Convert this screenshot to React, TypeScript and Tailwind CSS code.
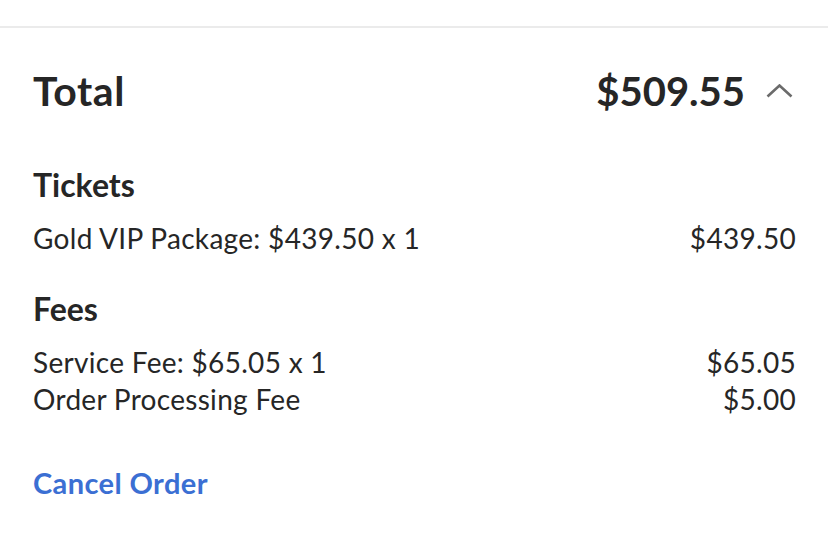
export default function App() {
  const font = { fontFamily: 'Lato, "Noto Sans", sans-serif' }
  return (
    <div className="min-h-[537px] w-[828px] bg-white text-[#262626]" style={font}>
      <div className="h-[26px]" />
      <div className="border-t-2 border-[#ebebeb] px-[33px] pr-[32px]">
        <div className="flex items-center justify-between pt-[41px]">
          <h1 className="text-[41px] font-bold leading-[44px] tracking-[0.6px]">Total</h1>
          <div className="flex items-center gap-[21px]">
            <span className="text-[40px] font-bold leading-[44px]">$509.55</span>
            <svg width="27" height="14" viewBox="0 0 27 14" fill="none" className="mr-[3px]">
              <path d="M1.5 12.5 L13.5 1.5 L25.5 12.5" stroke="#6b6b6b" strokeWidth="2.6" />
            </svg>
          </div>
        </div>

        <h2 className="mt-[54px] text-[32px] font-bold leading-[36px]">Tickets</h2>
        <div className="mt-[18px] flex justify-between text-[28px] leading-[34px] tracking-[0.3px]">
          <span>Gold VIP Package: $439.50 x 1</span>
          <span>$439.50</span>
        </div>

        <h2 className="mt-[36px] text-[32px] font-bold leading-[36px]">Fees</h2>
        <div className="mt-[18px] flex flex-col gap-[3px] text-[28px] leading-[34px] tracking-[0.3px]">
          <div className="flex justify-between">
            <span>Service Fee: $65.05 x 1</span>
            <span>$65.05</span>
          </div>
          <div className="flex justify-between">
            <span>Order Processing Fee</span>
            <span>$5.00</span>
          </div>
        </div>

        <button className="mt-[50px] text-[29px] font-bold leading-[34px] tracking-[0.4px] text-[#3b6fd3]">
          Cancel Order
        </button>
      </div>
    </div>
  )
}
